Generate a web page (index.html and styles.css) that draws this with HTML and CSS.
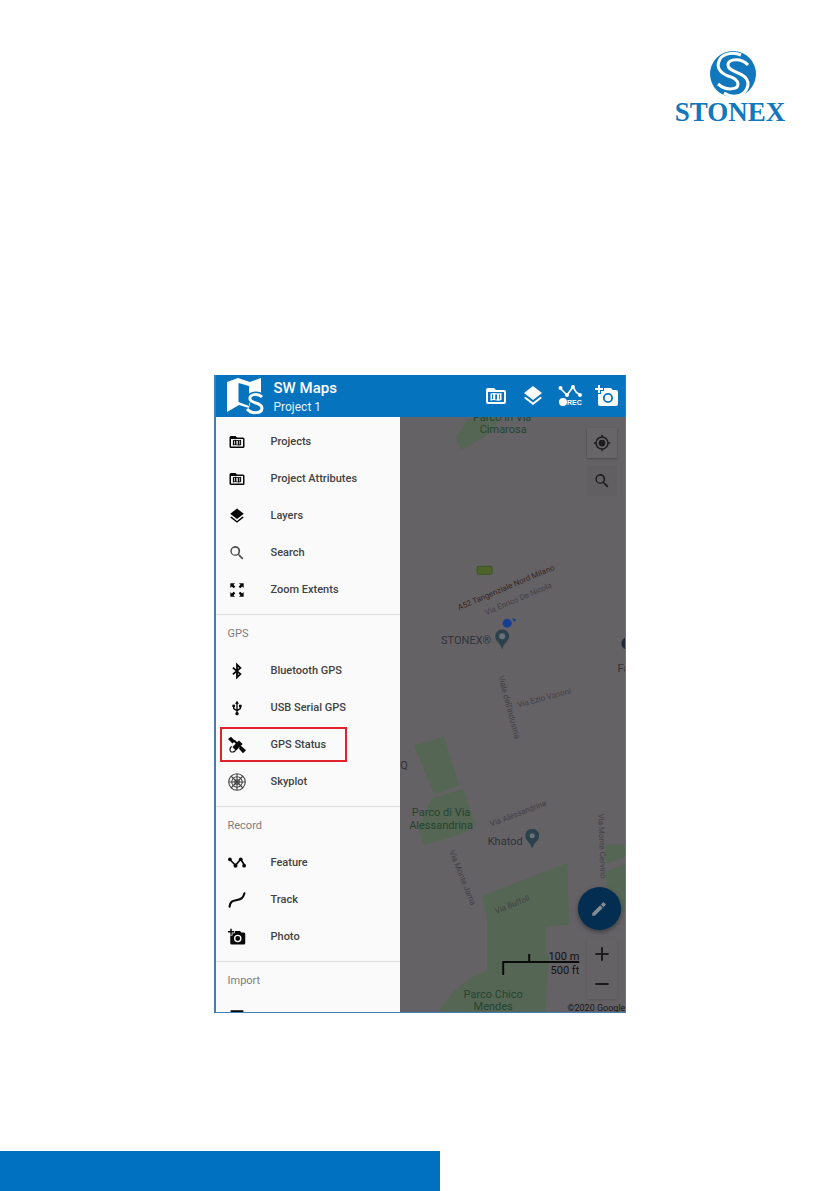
FILE: index.html
```html
<!DOCTYPE html>
<html lang="en">
<head>
<meta charset="utf-8">
<meta name="viewport" content="width=device-width, initial-scale=1">
<title>SW Maps</title>
<link rel="stylesheet" href="styles.css">
</head>
<body>
<svg class="defs" aria-hidden="true">
  <symbol id="folder" viewBox="0 0 24 24"><path fill-rule="evenodd" d="M4 4h6l2 2h8a2 2 0 0 1 2 2v10a2 2 0 0 1-2 2H4a2 2 0 0 1-2-2V6a2 2 0 0 1 2-2zm0 4v10h16V8z"/><path fill-rule="evenodd" d="M6.500 9.500 9.500 9l5 .600 3-.600v7l-3 .700-5-.600-3 .600zm1.500 1v4.800l1-.200v-4.800zm3.200-.100v5l1.800.200v-5zm4 .200v4.800l.900-.200v-4.800z"/></symbol>
  <symbol id="layers" viewBox="0 0 24 24"><path d="m12 18.500-7.400-5.700L3 14.100l9 7 9-7-1.600-1.300zM12 16l7.400-5.700L21 9l-9-7-9 7 1.600 1.300z"/></symbol>
  <symbol id="search" viewBox="0 0 24 24"><path d="M15.500 14h-.790l-.280-.270A6.500 6.500 0 1 0 13.700 14.400l.300.300v.800l5 5 1.500-1.500zm-6 0a4.500 4.500 0 1 1 0-9 4.500 4.500 0 0 1 0 9z"/></symbol>
  <symbol id="extents" viewBox="0 0 24 24"><path d="M2 2h7L6.800 4.200 9.500 7 7 9.500 4.200 6.800 2 9zm20 0v7l-2.200-2.200L17 9.500 14.500 7l2.700-2.800L15 2zM2 22v-7l2.200 2.200L7 14.500 9.500 17l-2.700 2.800L9 22zm20 0h-7l2.200-2.200L14.500 17l2.500-2.500 2.800 2.700L22 15z"/></symbol>
  <symbol id="bluetooth" viewBox="0 0 24 24"><path d="m6.500 7.500 10 8.500-4.500 4.500v-17L16.500 8l-10 8.500" fill="none" stroke="currentColor" stroke-width="2.400"/></symbol>
  <symbol id="usb" viewBox="0 0 24 24"><path d="M12 4v16M7 9v4l5 3 5-3V8" fill="none" stroke="currentColor" stroke-width="2"/><path d="m12 1 3 4.500H9zM15 7h4v4h-4z"/><circle cx="7" cy="9" r="2.200"/><circle cx="12" cy="20.500" r="2.500"/></symbol>
  <symbol id="satellite" viewBox="0 0 24 24"><path d="m0 4 4-3 5.500 5.500L6 10zM14.500 17l3.500-3.500 6 5.500-4 4zM6 14.500l8.500-8.500 5 4.500-9 9zM7 7l2-2 9 9-2 2z"/><path d="M5 14c-3 2-3 5-1 7 2 1 5 0 6-2" fill="none" stroke="currentColor" stroke-width="1.500"/></symbol>
  <symbol id="skyplot" viewBox="0 0 24 24"><g fill="none" stroke="currentColor" stroke-width="1.500"><circle cx="12" cy="12" r="11"/><circle cx="12" cy="12" r="7"/><circle cx="12" cy="12" r="3"/><path d="M12 1v22M1 12h22M4 4l16 16M20 4 4 20"/></g></symbol>
  <symbol id="feature" viewBox="0 0 24 24"><path d="m2 7 8 8 7-8 5 8" fill="none" stroke="currentColor" stroke-width="2.200"/><circle cx="2.500" cy="7" r="2.500"/><circle cx="10" cy="15.500" r="2.700"/><circle cx="17" cy="7" r="2.500"/><circle cx="21.500" cy="15.500" r="2.500"/></symbol>
  <symbol id="track" viewBox="0 0 24 24"><path d="M2 21c1-8 5-8 10-9s8-2 10-9" fill="none" stroke="currentColor" stroke-width="2.800" stroke-linecap="round"/></symbol>
  <symbol id="photo" viewBox="0 0 24 24"><path fill-rule="evenodd" d="M3 4V1h2v3h3v2H5v3H3V6H0V4zm3 6V7h3V4h7l1.800 2H21a2 2 0 0 1 2 2v12a2 2 0 0 1-2 2H5a2 2 0 0 1-2-2V10zm7 9a5 5 0 1 0 0-10 5 5 0 0 0 0 10zm0-1.800a3.200 3.200 0 1 1 0-6.400 3.200 3.200 0 0 1 0 6.400z"/></symbol>
  <symbol id="locate" viewBox="0 0 24 24"><circle cx="12" cy="12" r="4.500"/><path d="M12 1v3m0 16v3M1 12h3m16 0h3" stroke="currentColor" stroke-width="2"/><circle cx="12" cy="12" r="8" fill="none" stroke="currentColor" stroke-width="2"/></symbol>
  <symbol id="pin" viewBox="0 0 14 20"><path d="M7 0a7 7 0 0 1 7 7c0 5-5 6-7 13C5 13 0 12 0 7a7 7 0 0 1 7-7z"/></symbol>
</svg>

<header class="page-header">
  <svg class="brand" viewBox="0 0 116 76" role="img" aria-label="Stonex">
    <circle class="brand-fill" cx="61" cy="24" r="23"/>
    <path class="brand-line" d="M69 5C62 2 52 3 48 9c-5 9 1 14 8 17 7 2 10 4 10 8 0 6-12 7-20 0"/>
    <path class="brand-line" d="M76 15c-6-7-20-7-20 0 0 4 4 5 10 8 8 3 13 9 8 17-4 7-15 8-22 3"/>
    <text class="brand-text" x="58" y="71">STONEX</text>
  </svg>
</header>

<main class="content">
  <section class="app">
    <header class="app-bar">
      <svg class="app-logo" viewBox="0 0 40 38" aria-hidden="true">
        <path fill-rule="evenodd" d="m1 5 11-4 12 4 11-4v19c-7-2-13 1-11 7l-1 4-10-3L1 35zm11.500 1v19l10.500 4V9z"/>
        <path class="app-logo-halo" d="M36 20c-4-4-13-3-12 2 1 5 12 3 12 9 0 6-11 6-15 1"/>
        <path class="app-logo-s" d="M36 20c-4-4-13-3-12 2 1 5 12 3 12 9 0 6-11 6-15 1"/>
      </svg>
      <div class="titles">
        <h1>SW Maps</h1>
        <p>Project 1</p>
      </div>
      <div class="actions">
        <button type="button" aria-label="Projects"><svg><use href="#folder"/></svg></button>
        <button type="button" aria-label="Layers"><svg><use href="#layers"/></svg></button>
        <button type="button" aria-label="Record">
          <svg viewBox="0 0 24 24"><path d="m2 4 7 7 6-8 3 5 4 3" fill="none" stroke="currentColor" stroke-width="1.600"/><circle cx="2.500" cy="4" r="2"/><circle cx="9" cy="11" r="2"/><circle cx="15" cy="3" r="2"/><circle cx="22" cy="11" r="2"/><circle cx="5" cy="18" r="4"/><text class="rec" x="9" y="21">REC</text></svg>
        </button>
        <button type="button" aria-label="Photo"><svg><use href="#photo"/></svg></button>
      </div>
    </header>

    <div class="app-body">
      <nav class="drawer">
        <ul>
          <li><a href="#"><svg><use href="#folder"/></svg>Projects</a></li>
          <li><a href="#"><svg><use href="#folder"/></svg>Project Attributes</a></li>
          <li><a href="#"><svg><use href="#layers"/></svg>Layers</a></li>
          <li><a href="#"><svg class="muted"><use href="#search"/></svg>Search</a></li>
          <li><a href="#"><svg class="small"><use href="#extents"/></svg>Zoom Extents</a></li>
        </ul>
        <h2>GPS</h2>
        <ul>
          <li><a href="#"><svg><use href="#bluetooth"/></svg>Bluetooth GPS</a></li>
          <li><a href="#"><svg class="small"><use href="#usb"/></svg>USB Serial GPS</a></li>
          <li><a class="marked" href="#"><svg><use href="#satellite"/></svg>GPS Status</a></li>
          <li><a href="#"><svg class="muted"><use href="#skyplot"/></svg>Skyplot</a></li>
        </ul>
        <h2>Record</h2>
        <ul>
          <li><a href="#"><svg><use href="#feature"/></svg>Feature</a></li>
          <li><a href="#"><svg><use href="#track"/></svg>Track</a></li>
          <li><a href="#"><svg><use href="#photo"/></svg>Photo</a></li>
        </ul>
        <h2>Import</h2>
        <ul>
          <li><a href="#" aria-label="Import file"><svg viewBox="0 0 24 24"><path d="M5 3h14v18H5z" fill="none" stroke="currentColor" stroke-width="3"/></svg></a></li>
        </ul>
      </nav>

      <div class="map">
        <svg class="map-canvas" viewBox="0 0 225 594" preserveAspectRatio="xMinYMin slice">
          <g class="park">
            <path d="M56 20 67 3l20-3h12l-4 13-31 19-4 0z"/>
            <path d="m14 328 30-9 15 49-25 9z"/>
            <path d="m32 381 31-10 12 35-10 9-41 13-6-20z"/>
            <path d="m82 478 85-33 2 62-24 2v28l4 0-4 57H39c10-20 27-33 48-42V500z"/>
            <path d="M205 427h20v13l-20 6zM205 454l20-8v48h-16z"/>
          </g>
          <rect class="shield" x="77" y="149" width="15" height="8" rx="2"/>
          <g class="label green">
            <text x="102" y="4">Parco in Via</text><text x="103" y="16">Cimarosa</text>
            <text x="41" y="398">Parco di Via</text><text x="41" y="411">Alessandrina</text>
            <text x="93" y="580">Parco Chico</text><text x="93" y="592">Mendes</text>
          </g>
          <g class="label place">
            <text x="66" y="227">STONEX®</text><text x="105" y="427">Khatod</text>
            <text x="223" y="255">Fa</text><text x="4" y="351">Q</text>
          </g>
          <g class="street">
            <text class="highway" transform="translate(59 193) rotate(-23)">A52 Tangenziale Nord Milano</text>
            <text transform="translate(86 198) rotate(-23)">Via Enrico De Nicola</text>
            <text transform="translate(118 290) rotate(-15)">Via Ezio Vanoni</text>
            <text transform="translate(98 259) rotate(75)">Viale dell'Industria</text>
            <text transform="translate(91 409) rotate(-21)">Via Alessandrina</text>
            <text transform="translate(49 434) rotate(68)">Via Monte Jama</text>
            <text transform="translate(96 496) rotate(-22)">Via Buffoli</text>
            <text transform="translate(198 396) rotate(88)">Via Monte Cervino</text>
          </g>
          <circle class="position" cx="107" cy="206" r="4.500"/><path class="position" d="m112 201 4 1-2 3z"/>
          <use class="pin" href="#pin" x="95" y="212" width="14" height="20"/><circle class="pin-dot" cx="102" cy="219" r="3"/>
          <use class="pin" href="#pin" x="125" y="411" width="14" height="20"/><circle class="pin-dot" cx="132" cy="418" r="2.500"/>
          <circle class="pin dark" cx="227" cy="226" r="6"/>
          <path class="scale-line" d="M103 557v-13h76M129 544v-8"/>
          <g class="scale"><text x="179" y="542">100 m</text><text x="179" y="556">500 ft</text></g>
          <text class="copyright" x="225" y="593">©2020 Google</text>
        </svg>
        <div class="map-tools">
          <button type="button" aria-label="My location"><svg><use href="#locate"/></svg></button>
          <button class="flat" type="button" aria-label="Search map"><svg><use href="#search"/></svg></button>
        </div>
        <button class="edit" type="button" aria-label="Edit"><svg viewBox="0 0 24 24"><path d="M3 17.500V21h3.500L17 10.500 13.500 7zM14.500 6 18 9.500l2.700-2.700a1 1 0 0 0 0-1.400l-2.100-2.100a1 1 0 0 0-1.400 0z"/></svg></button>
        <div class="zoom">
          <button type="button" aria-label="Zoom in"><svg viewBox="0 0 24 24"><path d="M10.500 2h3v8.500H22v3h-8.500V22h-3v-8.500H2v-3h8.500z"/></svg></button>
          <button type="button" aria-label="Zoom out"><svg viewBox="0 0 24 24"><path d="M2 10.500h20v3H2z"/></svg></button>
        </div>
      </div>
    </div>
  </section>
</main>
<footer class="page-footer"></footer>
</body>
</html>
```
FILE: styles.css
```css
* { box-sizing: border-box; }

body {
  margin: 0;
  min-height: 100vh;
  display: flex;
  flex-direction: column;
  background: #fff;
  font-family: Roboto, "Liberation Sans", sans-serif;
}

button {
  display: grid;
  place-items: center;
  padding: 0;
  border: 0;
  background: none;
  color: inherit;
}

svg { display: block; fill: currentColor; }
.defs { position: absolute; width: 0; height: 0; }

.page-header {
  display: flex;
  justify-content: flex-end;
  padding: 50px 51px 0 24px;
}

.brand { width: 116px; height: 76px; color: #1278bd; }
.brand-line { fill: none; stroke: #fff; stroke-width: 3; }
.brand-text {
  font: bold 27px "Liberation Serif", serif;
  text-anchor: middle;
}

.content {
  flex: 1;
  padding: 249px 16px 138px;
}

.app {
  display: flex;
  flex-direction: column;
  max-width: 412px;
  aspect-ratio: 412 / 638;
  margin: 0 auto;
  border: solid #427fb9;
  border-width: 0 1px 1px 2px;
  overflow: hidden;
}

.app-bar {
  display: flex;
  flex: none;
  align-items: center;
  height: 42px;
  padding: 0 6px 0 10px;
  gap: 8px;
  background: #0573be;
  color: #fff;
}

.app-logo { width: 40px; height: 38px; }
.app-logo-halo, .app-logo-s { fill: none; stroke: #0573be; stroke-width: 6; }
.app-logo-s { stroke: #fff; stroke-width: 3; }

.titles { flex: 1; padding-top: 2px; }
.titles h1, .titles p { margin: 0; white-space: nowrap; }
.titles h1 { font-size: 15px; font-weight: 500; line-height: 20px; }
.titles p { font-size: 12px; line-height: 18px; color: #e3f0f8; }

.actions { display: flex; gap: 13px; }
.actions svg { width: 24px; height: 24px; }
.rec { font-size: 7px; font-weight: 900; }

.app-body { display: flex; flex: 1; min-height: 0; }

.drawer {
  flex: 0 0 184px;
  min-height: 0;
  padding-top: 6px;
  overflow: hidden;
  background: #fafafa;
}

.drawer ul { margin: 0; padding: 0 0 6px; list-style: none; }

.drawer a {
  display: flex;
  align-items: center;
  gap: 25px;
  height: 37px;
  padding-left: 12px;
  color: #424242;
  font-size: 11px;
  font-weight: 500;
  text-decoration: none;
  white-space: nowrap;
}

.drawer a svg { flex: none; width: 18px; height: 18px; color: #080808; }
.drawer a svg.small { padding: 1px; }
.drawer a svg.muted { color: #484848; }

.drawer a.marked {
  width: 127px;
  height: 35px;
  margin: 1px 0 1px 4px;
  padding-left: 6px;
  border: 2px solid #e3212b;
}

.drawer h2 {
  margin: 0;
  padding-left: 12px;
  border-top: 1px solid #dcdcdc;
  color: #7c7c7c;
  font-size: 11px;
  font-weight: 400;
  line-height: 37px;
}

.map {
  position: relative;
  flex: 1;
  min-width: 0;
  overflow: hidden;
  background: #656266;
}

.map-canvas { width: 100%; height: 100%; }
.park { fill: #566655; }
.shield { fill: #4c6428; stroke: #3f5328; }
.label { font-size: 11px; text-anchor: middle; }
.green { fill: #24452f; }
.place { fill: #303237; }
.street { fill: #414044; font-size: 8px; }
.highway { fill: #38251d; }
.position { fill: #173f91; }
.pin { color: #2d414c; fill: #2d414c; }
.pin.dark { fill: #202938; }
.pin-dot { fill: #68727a; }
.scale-line { fill: none; stroke: #0b0b0b; stroke-width: 2; }
.scale { fill: #111; font-size: 11px; text-anchor: end; }
.copyright { fill: #161616; font-size: 9px; text-anchor: end; }

.map-tools, .zoom {
  position: absolute;
  right: 8px;
  display: grid;
  color: #1c1c1c;
}

.map-tools { top: 11px; gap: 8px; }
.map-tools button {
  width: 30px;
  height: 30px;
  background: #686568;
  box-shadow: 0 1px 2px #4c494c;
}
.map-tools .flat { background: #625f63; box-shadow: none; }
.map-tools svg { width: 18px; height: 18px; }

.edit {
  position: absolute;
  right: 4px;
  bottom: 82px;
  width: 43px;
  height: 43px;
  border-radius: 50%;
  background: #032e52;
  box-shadow: 0 2px 4px #393b40;
  color: #858c91;
}
.edit svg { width: 18px; height: 18px; }

.zoom { bottom: 13px; background: #656266; box-shadow: 0 1px 2px #5a575a; }
.zoom button { width: 30px; height: 30px; }
.zoom svg { width: 16px; height: 16px; }

.page-footer {
  width: 52.4%;
  height: 40px;
  background: #0070c0;
}
```
